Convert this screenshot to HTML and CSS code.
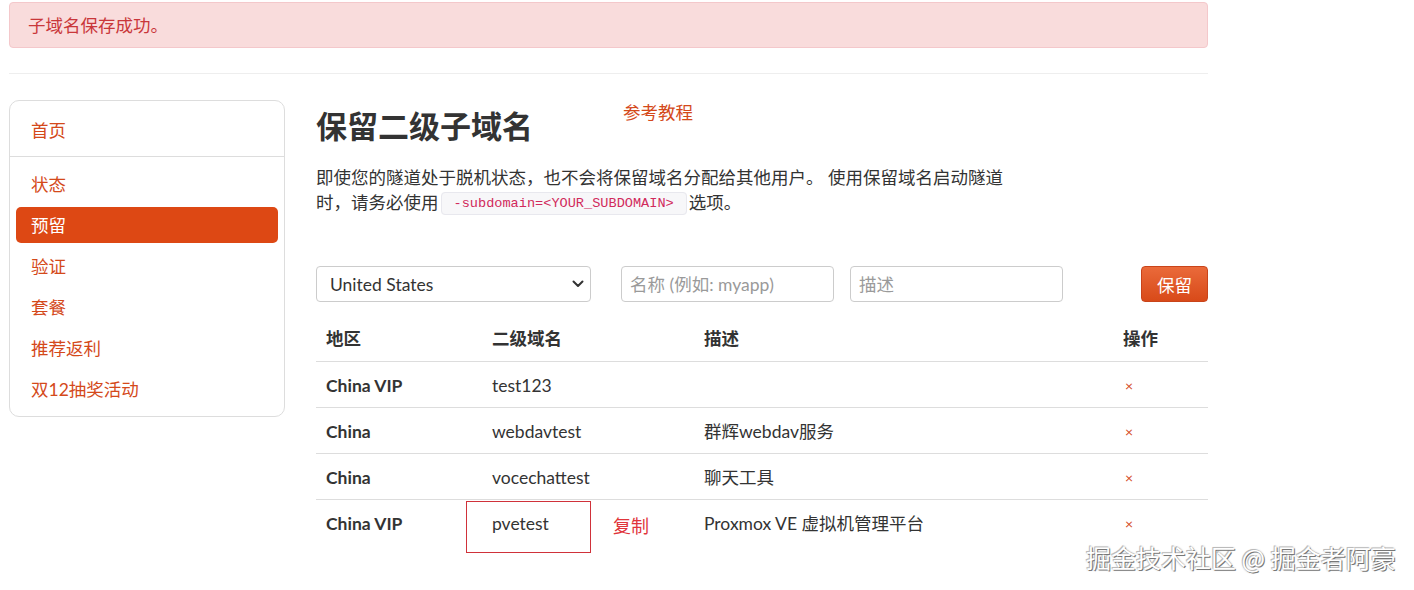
FILE: index.html
```html
<!DOCTYPE html>
<html lang="zh-CN">
<head>
<meta charset="utf-8">
<title>保留二级子域名</title>
<link rel="stylesheet" href="styles.css">
</head>
<body>
<div class="page">
  <div class="alert">子域名保存成功。</div>
  <hr class="rule">
  <div class="layout">
    <nav class="sidebar">
      <a class="nav-item" href="#">首页</a>
      <div class="nav-divider"></div>
      <a class="nav-item" href="#">状态</a>
      <a class="nav-item active" href="#">预留</a>
      <a class="nav-item" href="#">验证</a>
      <a class="nav-item" href="#">套餐</a>
      <a class="nav-item" href="#">推荐返利</a>
      <a class="nav-item" href="#">双12抽奖活动</a>
    </nav>
    <main class="main">
      <div class="head-row">
        <h1 class="title">保留二级子域名</h1>
        <a class="tutorial" href="#">参考教程</a>
      </div>
      <p class="lead">即使您的隧道处于脱机状态，也不会将保留域名分配给其他用户。 使用保留域名启动隧道时，请务必使用<code class="code">-subdomain=&lt;YOUR_SUBDOMAIN&gt;</code>选项。</p>
      <form class="form-row">
        <div class="select-wrap">
          <select class="select">
            <option>United States</option>
          </select>
          <svg class="chev" width="12" height="8" viewBox="0 0 12 8"><path d="M1.5 1.5 L6 6 L10.5 1.5" fill="none" stroke="#333" stroke-width="2" stroke-linecap="round" stroke-linejoin="round"/></svg>
        </div>
        <input class="input f-name" type="text" placeholder="名称 (例如: myapp)">
        <input class="input f-desc" type="text" placeholder="描述">
        <button class="btn" type="button">保留</button>
      </form>
      <table class="table">
        <colgroup>
          <col class="c1"><col class="c2"><col class="c3"><col class="c4">
        </colgroup>
        <thead>
          <tr><th>地区</th><th>二级域名</th><th>描述</th><th>操作</th></tr>
        </thead>
        <tbody>
          <tr><td class="b">China VIP</td><td>test123</td><td></td><td><span class="del">×</span></td></tr>
          <tr><td class="b">China</td><td>webdavtest</td><td>群辉webdav服务</td><td><span class="del">×</span></td></tr>
          <tr><td class="b">China</td><td>vocechattest</td><td>聊天工具</td><td><span class="del">×</span></td></tr>
          <tr><td class="b">China VIP</td><td>pvetest</td><td>Proxmox VE 虚拟机管理平台</td><td><span class="del">×</span></td></tr>
        </tbody>
      </table>
      <div class="mark-box"></div>
      <div class="mark-copy">复制</div>
    </main>
  </div>
</div>
<div class="watermark">掘金技术社区 @ 掘金者阿豪</div>
</body>
</html>
```
FILE: styles.css
```css
html, body {
  margin: 0;
  padding: 0;
  background: #fff;
}
body {
  font-family: Lato, "Noto Sans CJK SC", "Noto Sans", sans-serif;
  font-size: 17.5px;
  line-height: 25px;
  color: #333;
  position: relative;
  height: 590px;
  overflow: hidden;
}
.page {
  width: 1199px;
  padding: 2px 0 0 9px;
}
.alert {
  height: 44px;
  line-height: 46px;
  border: 1px solid #f4c8cb;
  background: #f9dcdc;
  color: #c9373a;
  border-radius: 4px;
  padding: 0 18px;
}
.rule {
  margin: 25px 0 0;
  border: 0;
  border-top: 1px solid #eeeeee;
  height: 0;
}
.layout {
  display: flex;
  margin-top: 26px;
  gap: 31px;
}
.sidebar {
  width: 262px;
  flex: none;
  border: 1px solid #dddddd;
  border-radius: 10px;
  padding: 11px 6px 9px;
  display: flex;
  flex-direction: column;
  gap: 5px;
  align-self: flex-start;
}
.nav-item {
  display: block;
  height: 36px;
  box-sizing: border-box;
  padding: 2px 0 0 15px;
  line-height: 34px;
  color: #d4491a;
  text-decoration: none;
  border-radius: 5px;
}
.nav-item.active {
  background: #dd4814;
  color: #fff;
}
.nav-divider {
  margin: 3px -6px 4px;
  border-top: 1px solid #dddddd;
}
.main {
  flex: 1;
  position: relative;
  width: 892px;
}
.head-row {
  display: flex;
  align-items: flex-start;
}
.title {
  margin: 9px 0 0;
  font-size: 31px;
  line-height: 34px;
  font-weight: bold;
  color: #333;
}
.tutorial {
  margin-left: 90px;
  color: #d4491a;
  text-decoration: none;
}
.lead {
  margin: 22px 0 0;
  width: 690px;
}
.code {
  font-family: "Liberation Mono", "DejaVu Sans Mono", monospace;
  font-size: 13.6px;
  line-height: 0;
  vertical-align: 2px;
  color: #d12a5c;
  background: #f7f7f9;
  border: 1px solid #e8e8ee;
  border-radius: 4px;
  padding: 3px 12px;
  margin: 0 2px 0 2px;
}
.form-row {
  display: flex;
  margin: 51px 0 0;
  height: 36px;
}
.select-wrap {
  position: relative;
  width: 275px;
  height: 36px;
}
.select {
  appearance: none;
  -webkit-appearance: none;
  width: 100%;
  height: 36px;
  border: 1px solid #cccccc;
  border-radius: 4px;
  background: #fff;
  font-family: inherit;
  font-size: 17.5px;
  color: #333;
  padding: 0 30px 0 13px;
  margin: 0;
}
.chev {
  position: absolute;
  left: 256px;
  top: 14px;
  pointer-events: none;
}
.input {
  box-sizing: border-box;
  width: 213px;
  height: 36px;
  border: 1px solid #cccccc;
  border-radius: 4px;
  font-family: inherit;
  font-size: 17.5px;
  color: #333;
  padding: 0 8px;
  margin: 0;
}
.input::placeholder {
  color: #9a9a9a;
}
.f-name {
  margin-left: 30px;
}
.f-desc {
  margin-left: 16px;
}
.btn {
  margin-left: auto;
  width: 67px;
  height: 36px;
  border: 1px solid #c9441a;
  border-radius: 4px;
  background: linear-gradient(#ea6a3a, #d84a19);
  color: #fff;
  font-family: inherit;
  font-size: 17.5px;
  padding: 0;
}
.table {
  margin-top: 14px;
  width: 892px;
  border-collapse: collapse;
  table-layout: fixed;
}
.c1 { width: 166px; }
.c2 { width: 212px; }
.c3 { width: 419px; }
.c4 { width: 95px; }
.table th {
  text-align: left;
  font-weight: bold;
  padding: 10px 10px;
  line-height: 25px;
  border-bottom: 1px solid #dddddd;
}
.table td {
  padding: 10px 10px 9px;
  line-height: 25px;
  border-bottom: 1px solid #dddddd;
}
.table tbody tr:last-child td {
  border-bottom: 0;
}
.table td.b {
  font-weight: bold;
}
.del {
  color: #d4491a;
  font-size: 14px;
  padding-left: 2px;
}
.mark-box {
  position: absolute;
  left: 150px;
  top: 401px;
  width: 123px;
  height: 50px;
  border: 1px solid #d0323a;
}
.mark-copy {
  position: absolute;
  left: 297px;
  top: 414px;
  color: #e0353b;
  font-size: 18px;
  line-height: 25px;
}
.watermark {
  position: absolute;
  left: 1086px;
  top: 542px;
  font-family: "Noto Sans CJK SC", sans-serif;
  font-size: 25px;
  line-height: 30px;
  color: #ffffff;
  text-shadow: 1px 1px 0 #777, -1px -1px 0 #bbb, 0 0 2px #999;
  white-space: nowrap;
}
```
